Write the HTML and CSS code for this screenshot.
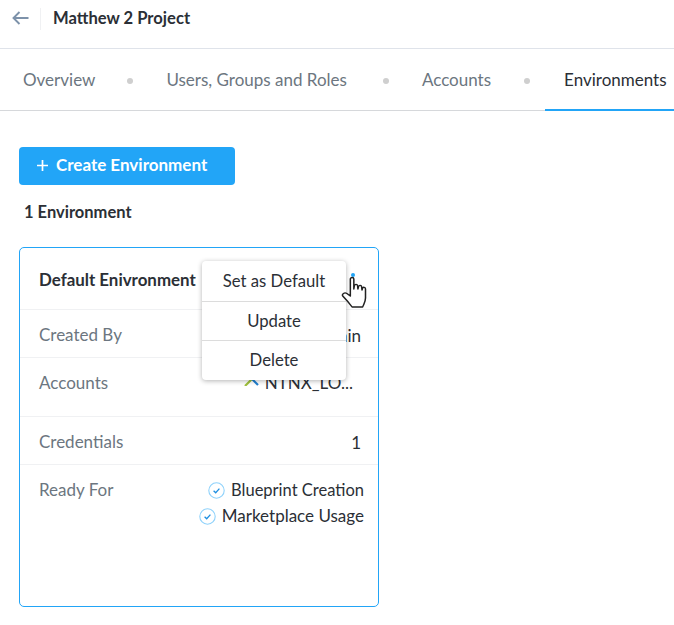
FILE: index.html
```html
<!DOCTYPE html>
<html lang="en">
<head>
    <meta charset="UTF-8">
    <title>Matthew 2 Project</title>
    <link rel="stylesheet" href="styles.css">
</head>
<body>
    <!-- Top bar -->
    <div class="topbar">
        <div class="back">
            <svg class="back-arrow" width="18" height="14" viewBox="0 0 18 14"><path d="M7.5 1 L1.5 7 L7.5 13 M1.5 7 H16.5" fill="none" stroke="#7d92aa" stroke-width="1.9"/></svg>
        </div>
        <div class="project-name">Matthew 2 Project</div>
    </div>

    <!-- Tabs -->
    <div class="tabs">
        <div class="tab">Overview</div>
        <span class="dot dot-first"></span>
        <div class="tab tab-users">Users, Groups and Roles</div>
        <span class="dot dot-second"></span>
        <div class="tab tab-accounts">Accounts</div>
        <span class="dot"></span>
        <div class="tab tab-active">Environments</div>
    </div>

    <div class="content">
        <button class="create-btn">
            <svg class="plus" width="11" height="11" viewBox="0 0 11 11"><path d="M5.5 0 V11 M0 5.5 H11" stroke="#fff" stroke-width="1.7"/></svg>
            Create Environment
        </button>
        <div class="count">1 Environment</div>

        <div class="card">
            <div class="card-title row">Default Enivronment</div>
            <div class="row row-created">
                <span class="label">Created By</span>
                <span class="value">admin</span>
            </div>
            <div class="row row-accounts">
                <span class="label">Accounts</span>
                <span class="value account">
                    <svg class="account-icon" width="16" height="12" viewBox="0 0 16 12"><path d="M2 0 L8 5 L13 0 M1 12 L8 5" fill="none" stroke="#9fc13c" stroke-width="2.2"/><path d="M8 5 L14 11" fill="none" stroke="#1f7fd0" stroke-width="2.2"/></svg>
                    NTNX_LO...
                </span>
            </div>
            <div class="row row-creds">
                <span class="label">Credentials</span>
                <span class="value">1</span>
            </div>
            <div class="row row-ready">
                <span class="label">Ready For</span>
                <div class="ready-list">
                    <div class="ready-item item-blueprint">
                        <svg class="check" width="17" height="17" viewBox="0 0 17 17"><circle cx="8.5" cy="8.5" r="7.7" fill="none" stroke="#8fd2fb" stroke-width="1.1"/><path d="M5.6 8.8 L7.7 10.8 L11.4 6.6" fill="none" stroke="#1f8fe0" stroke-width="1.3"/></svg>
                        Blueprint Creation
                    </div>
                    <div class="ready-item">
                        <svg class="check" width="17" height="17" viewBox="0 0 17 17"><circle cx="8.5" cy="8.5" r="7.7" fill="none" stroke="#8fd2fb" stroke-width="1.1"/><path d="M5.6 8.8 L7.7 10.8 L11.4 6.6" fill="none" stroke="#1f8fe0" stroke-width="1.3"/></svg>
                        Marketplace Usage
                    </div>
                </div>
            </div>

            <!-- Open menu -->
            <div class="menu">
                <div class="menu-item item-first">Set as Default</div>
                <div class="menu-item item-update">Update</div>
                <div class="menu-item">Delete</div>
            </div>
            <span class="kebab-dot"></span>
            <svg class="hand" width="28" height="34" viewBox="0 0 24 34" preserveAspectRatio="none"><path d="M8 3 C8 1 11 1 11 3 L11 13 L11.5 9.5 C12 8 14 8 14.2 9.8 L14.5 13 L15 10.5 C15.5 9 17.5 9 17.7 11 L18 14 L18.5 12 C19 10.8 21 11 21 13 L21 22 C21 26 19.5 28 18.5 31 L9.5 31 C7 27 4 23 1.5 20 C0.5 18 3 16 5 17.5 L8 20 Z" fill="#fff" stroke="#222" stroke-width="1.3" stroke-linejoin="round"/></svg>
        </div>
    </div>
</body>
</html>
```

FILE: styles.css
```css
body {
    margin: 0;
    background: #fff;
    font-family: "Lato", "Open Sans", sans-serif;
    font-size: 17px;
    color: #2b2f36;
    overflow: hidden;
}

/* Top bar */
.topbar {
    height: 48px;
    display: flex;
    align-items: flex-start;
    border-bottom: 1px solid #dfe3ea;
}
.back {
    width: 41px;
    height: 22px;
    margin-top: 8px;
    padding: 3px 0 0 12px;
    box-sizing: border-box;
    border-right: 1px solid #f0f1f3;
}
.back-arrow { display: block; }
.project-name {
    margin-left: 12px;
    margin-top: 8px;
    font-size: 16.6px;
    font-weight: 700;
    line-height: 20px;
}

/* Tabs */
.tabs {
    height: 61px;
    display: flex;
    align-items: center;
    border-bottom: 1px solid #d6d8db;
    padding-left: 23px;
    color: #6c7680;
    white-space: nowrap;
}
.tab {
    line-height: 62px;
    height: 61px;
}
.tab-active {
    color: #2b2f36;
    flex: 1;
    align-self: flex-start;
    height: 62px;
    margin-left: 15px;
    padding-left: 19px;
    box-sizing: border-box;
    border-bottom: 2px solid #22a5f7;
}
.dot {
    width: 6px;
    height: 6px;
    margin: 3px 0 0 33px;
    border-radius: 50%;
    background: #cfcfcf;
}
.dot-first { margin-left: 32px; }
.dot-second { margin-left: 36px; }
.tab-users { margin-left: 33px; }
.tab-accounts { margin-left: 33px; }

/* Main */
.content {
    padding: 36px 0 0 19px;
}
.create-btn {
    display: flex;
    align-items: center;
    gap: 8px;
    width: 216px;
    height: 38px;
    padding: 0 0 4px 18px;
    border: none;
    border-radius: 4px;
    background: #22a5f7;
    color: #fff;
    font-family: inherit;
    font-size: 17px;
    font-weight: 700;
}
.plus {
    margin-top: 2px;
}
.count {
    margin: 17px 0 0 5px;
    font-weight: 700;
    font-size: 16.5px;
    line-height: 20px;
}

.card {
    position: relative;
    width: 360px;
    height: 360px;
    box-sizing: border-box;
    margin-top: 25px;
    border: 1px solid #22a5f7;
    border-radius: 5px;
}
.row {
    display: flex;
    justify-content: space-between;
    box-sizing: border-box;
    padding: 0 17px 0 19px;
    border-bottom: 1px solid #f0f1f3;
}
.card-title {
    height: 62px;
    padding-top: 2px;
    align-items: center;
    font-size: 16.9px;
    font-weight: 700;
}
.row-created { height: 48px; align-items: center; padding-top: 3px; }
.row-accounts { height: 59px; padding-top: 15px; }
.row-creds { height: 48px; align-items: center; padding-top: 3px; }
.row-ready {
    border-bottom: none;
    padding-top: 15px;
    padding-right: 14px;
}
.label { color: #6c7680; line-height: 20px; }
.account { margin: -1px 8px 0 0; }
.account-icon { vertical-align: 3px; }
.ready-list {
    display: flex;
    flex-direction: column;
    align-items: flex-end;
    gap: 6px;
}
.ready-item {
    display: flex;
    align-items: center;
    gap: 6px;
    line-height: 20px;
}
.item-blueprint { font-size: 16.5px; }

/* Dropdown menu, sits over the card */
.menu {
    position: absolute;
    left: 182px;
    top: 13px;
    width: 144px;
    height: 119px;
    background: #fff;
    border-radius: 4px;
    box-shadow: 0 1px 5px rgba(0, 0, 0, 0.3);
    text-align: center;
    font-size: 16.7px;
}
.menu-item {
    height: 38px;
    line-height: 38px;
    border-top: 1px solid #dcdcdc;
}
.item-first {
    height: 40px;
    line-height: 40px;
    border-top: none;
}
.item-update { line-height: 39px; }
.kebab-dot {
    position: absolute;
    left: 331px;
    top: 25px;
    width: 4px;
    height: 4px;
    border-radius: 50%;
    background: #22a5f7;
}
.hand {
    position: absolute;
    left: 321px;
    top: 28px;
}
```
